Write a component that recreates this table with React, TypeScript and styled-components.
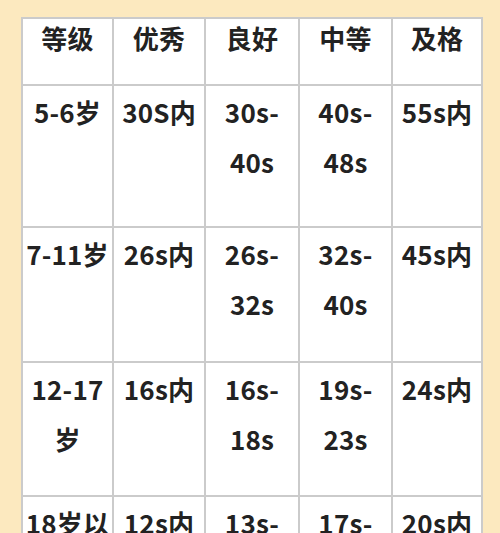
import React from "react";
import styled, { createGlobalStyle } from "styled-components";

const Global = createGlobalStyle`
  html, body {
    margin: 0;
    padding: 0;
    background: #fce9bf;
    overflow: hidden;
  }
  body {
    font-family: "Noto Sans CJK SC", "Noto Sans", sans-serif;
  }
`;

const Page = styled.div`
  width: 500px;
  height: 533px;
  overflow: hidden;
  padding: 17px 0 0 21px;
  box-sizing: border-box;
  background: #fce9bf;
`;

const Grid = styled.div`
  display: grid;
  grid-template-columns: 89px 90px 92px 91px 88px;
  grid-template-rows: 65px 140px 133px 132px 132px;
  gap: 2px;
  padding: 2px;
  width: max-content;
  background: #cbcbcb;
`;

const Cell = styled.div<{ $head?: boolean }>`
  background: #ffffff;
  color: #222222;
  font-weight: 700;
  font-size: 26px;
  text-align: center;
  white-space: nowrap;
  line-height: ${(p) => (p.$head ? "38px" : "50px")};
  padding-top: ${(p) => (p.$head ? "0" : "1px")};
  letter-spacing: 0.2px;
`;

const Line = styled.div``;

const head = ["等级", "优秀", "良好", "中等", "及格"];
const rows: string[][][] = [
  [["5-6岁"], ["30S内"], ["30s-", "40s"], ["40s-", "48s"], ["55s内"]],
  [["7-11岁"], ["26s内"], ["26s-", "32s"], ["32s-", "40s"], ["45s内"]],
  [["12-17", "岁"], ["16s内"], ["16s-", "18s"], ["19s-", "23s"], ["24s内"]],
  [["18岁以", "上"], ["12s内"], ["13s-", "16s"], ["17s-", "19s"], ["20s内"]],
];

export default function App() {
  return (
    <>
      <Global />
      <Page>
        <Grid>
          {head.map((h) => (
            <Cell key={h} $head>
              {h}
            </Cell>
          ))}
          {rows.map((r, i) =>
            r.map((c, j) => (
              <Cell key={`${i}-${j}`}>
                {c.map((l, k) => (
                  <Line key={k}>{l}</Line>
                ))}
              </Cell>
            ))
          )}
        </Grid>
      </Page>
    </>
  );
}
